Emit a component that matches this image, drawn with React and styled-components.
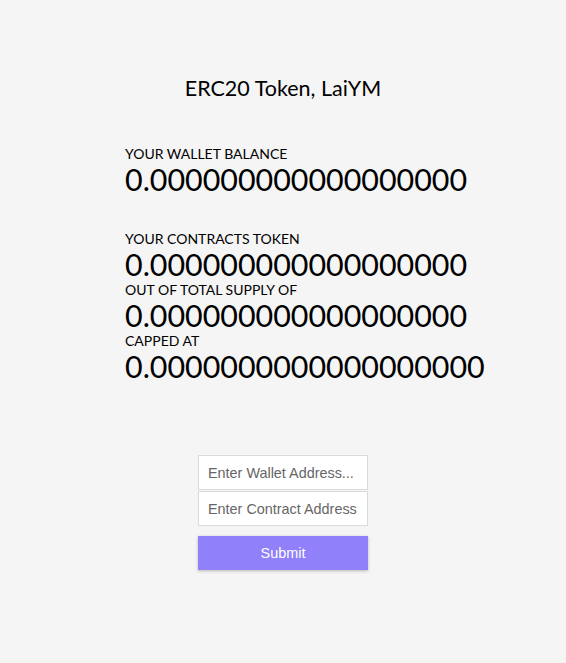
import React from 'react';
import styled, { createGlobalStyle } from 'styled-components';

const GlobalStyle = createGlobalStyle`
  html, body {
    margin: 0;
    padding: 0;
    background: #f5f5f5;
  }
  body {
    font-family: Lato, "Liberation Sans", sans-serif;
    color: #000;
  }
`;

const Page = styled.div`
  width: 566px;
  min-height: 663px;
  padding-top: 75px;
  box-sizing: border-box;
`;

const Title = styled.h1`
  margin: 0;
  text-align: center;
  font-size: 21.5px;
  font-weight: 400;
  line-height: 26px;
`;

const Stats = styled.div`
  margin: 44px 0 0 125px;
  display: flex;
  flex-direction: column;
`;

const Group = styled.div`
  margin-top: ${p => p.$gap || 0}px;
`;

const Label = styled.div`
  font-size: 14px;
  line-height: 17px;
  text-transform: uppercase;
`;

const Value = styled.div`
  font-size: 30.4px;
  line-height: 34px;
`;

const Form = styled.form`
  margin: 72px auto 0;
  width: 170px;
  display: flex;
  flex-direction: column;
`;

const Input = styled.input`
  box-sizing: border-box;
  width: 170px;
  height: 35px;
  margin-bottom: 1px;
  padding: 0 9px;
  border: 1px solid #dadada;
  background: #fff;
  font-family: "Liberation Sans", Arial, sans-serif;
  font-size: 14.4px;
  color: #333;
  outline: none;
  &::placeholder {
    color: #666;
  }
`;

const Button = styled.button`
  margin-top: 9px;
  height: 34px;
  border: none;
  background: #9080fa;
  color: #fff;
  font-family: "Liberation Sans", Arial, sans-serif;
  font-size: 14.4px;
  box-shadow: 0 1px 3px rgba(0, 0, 0, 0.25);
  cursor: pointer;
`;

const stats = [
  { label: 'Your wallet balance', value: '0.000000000000000000', gap: 0 },
  { label: 'Your contracts token', value: '0.000000000000000000', gap: 34 },
  { label: 'Out of total supply of', value: '0.000000000000000000', gap: 0 },
  { label: 'Capped at', value: '0.0000000000000000000', gap: 0 },
];

const App = () => {
  return (
    <Page>
      <GlobalStyle />
      <Title>ERC20 Token, LaiYM</Title>
      <Stats>
        {stats.map(s => (
          <Group key={s.label} $gap={s.gap}>
            <Label>{s.label}</Label>
            <Value>{s.value}</Value>
          </Group>
        ))}
      </Stats>
      <Form onSubmit={e => e.preventDefault()}>
        <Input placeholder="Enter Wallet Address..." />
        <Input placeholder="Enter Contract Address" />
        <Button type="submit">Submit</Button>
      </Form>
    </Page>
  );
};

export default App;
